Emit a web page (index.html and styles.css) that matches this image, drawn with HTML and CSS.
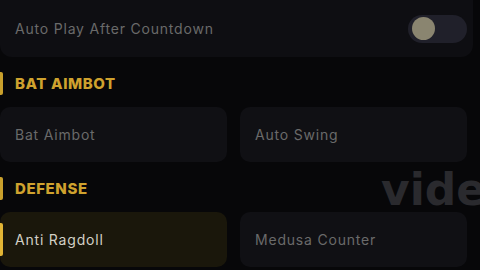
FILE: index.html
```html
<!DOCTYPE html>
<html>
<head>
<meta charset="utf-8">
<link rel="stylesheet" href="styles.css">
</head>
<body>
<div class="page">
  <div class="row-card">
    <span class="label">Auto Play After Countdown</span>
    <div class="toggle"><div class="knob"></div></div>
  </div>
  <div class="section"><span class="bar"></span><span class="title">BAT AIMBOT</span></div>
  <div class="grid">
    <div class="card"><span class="label">Bat Aimbot</span></div>
    <div class="card"><span class="label">Auto Swing</span></div>
  </div>
  <div class="section"><span class="bar"></span><span class="title">DEFENSE</span></div>
  <div class="grid">
    <div class="card active"><span class="accent"></span><span class="label">Anti Ragdoll</span></div>
    <div class="card"><span class="label">Medusa Counter</span></div>
  </div>
  <div class="watermark">video</div>
</div>
</body>
</html>
```
FILE: styles.css
```css
html, body {
  margin: 0;
  padding: 0;
  background: #070709;
  width: 480px;
  height: 270px;
  overflow: hidden;
}
.page {
  position: relative;
  width: 467px;
  height: 270px;
  padding-right: 13px;
  overflow: hidden;
  font-family: "Inter", "Noto Sans", sans-serif;
}
.row-card {
  height: 57px;
  background: #0e0e12;
  border-radius: 0 0 12px 12px;
  display: flex;
  align-items: center;
  justify-content: space-between;
  padding: 0 6px 0 15px;
  box-sizing: border-box;
  width: 473px;
}
.label {
  font-size: 14px;
  color: #6a6a6a;
  letter-spacing: 0.8px;
}
.toggle {
  width: 59px;
  height: 28px;
  border-radius: 14px;
  background: #20202a;
  display: flex;
  align-items: center;
  padding-left: 4px;
  box-sizing: border-box;
}
.knob {
  width: 23px;
  height: 23px;
  border-radius: 50%;
  background: #8a8570;
}
.section {
  display: flex;
  align-items: center;
  height: 23px;
  margin-top: 15px;
  margin-bottom: 12px;
}
.bar {
  width: 3px;
  height: 23px;
  background: #c9a02c;
  border-radius: 0 2px 2px 0;
}
.title {
  margin-left: 12px;
  font-size: 15px;
  font-weight: 800;
  color: #cfa22e;
  letter-spacing: 0.6px;
}
.grid {
  display: grid;
  grid-template-columns: 227px 227px;
  column-gap: 13px;
}
.card {
  position: relative;
  height: 55px;
  background: #101014;
  border-radius: 10px;
  display: flex;
  align-items: center;
  padding-left: 15px;
}
.card.active {
  background: #1a170b;
}
.card.active .label {
  color: #d2d0c6;
}
.accent {
  position: absolute;
  left: 0;
  top: 11px;
  width: 3px;
  height: 33px;
  background: #e2b535;
  border-radius: 0 2px 2px 0;
}
.watermark {
  position: absolute;
  left: 381px;
  top: 164px;
  font-family: "DejaVu Sans", sans-serif;
  font-size: 44px;
  font-weight: bold;
  color: #2a2a2e;
  white-space: nowrap;
}
```
